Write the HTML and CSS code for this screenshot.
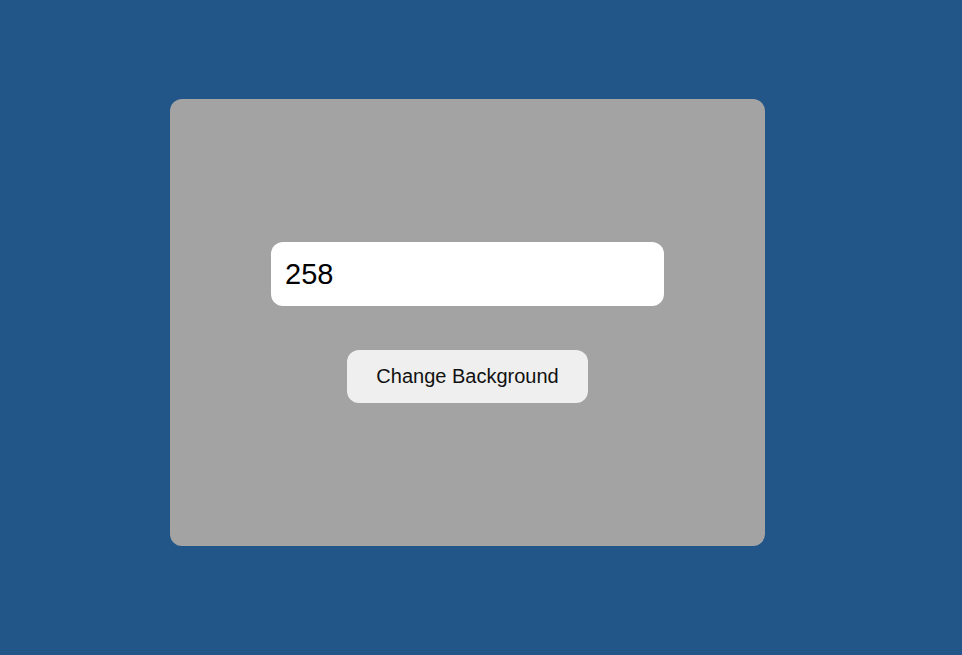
FILE: index.html
```html
<!DOCTYPE html>
<html>
<head>
<meta charset="utf-8">
<link rel="stylesheet" href="styles.css">
</head>
<body>
<main class="page">
  <section class="card">
    <input class="value-input" type="text" value="258">
    <button class="change-btn">Change Background</button>
  </section>
</main>
</body>
</html>
```
FILE: styles.css
```css
html, body {
  margin: 0;
  padding: 0;
}
body {
  background: #235688;
  font-family: "Liberation Sans", Arial, sans-serif;
  width: 962px;
  height: 655px;
  overflow: hidden;
}
.page {
  padding: 99px 0 0 170px;
}
.card {
  width: 595px;
  height: 447px;
  background: #a3a3a3;
  border-radius: 12px;
  display: flex;
  flex-direction: column;
  align-items: center;
  justify-content: center;
  gap: 44px;
}
.value-input {
  box-sizing: border-box;
  width: 393px;
  height: 64px;
  border: none;
  outline: none;
  border-radius: 12px;
  background: #ffffff;
  padding: 0 14px;
  font-family: "Liberation Sans", Arial, sans-serif;
  font-size: 29px;
  color: #000;
}
.change-btn {
  box-sizing: border-box;
  width: 241px;
  height: 53px;
  border: none;
  border-radius: 12px;
  background: #efefef;
  font-family: "Liberation Sans", Arial, sans-serif;
  font-size: 20px;
  color: #111;
  padding: 0;
}
```
